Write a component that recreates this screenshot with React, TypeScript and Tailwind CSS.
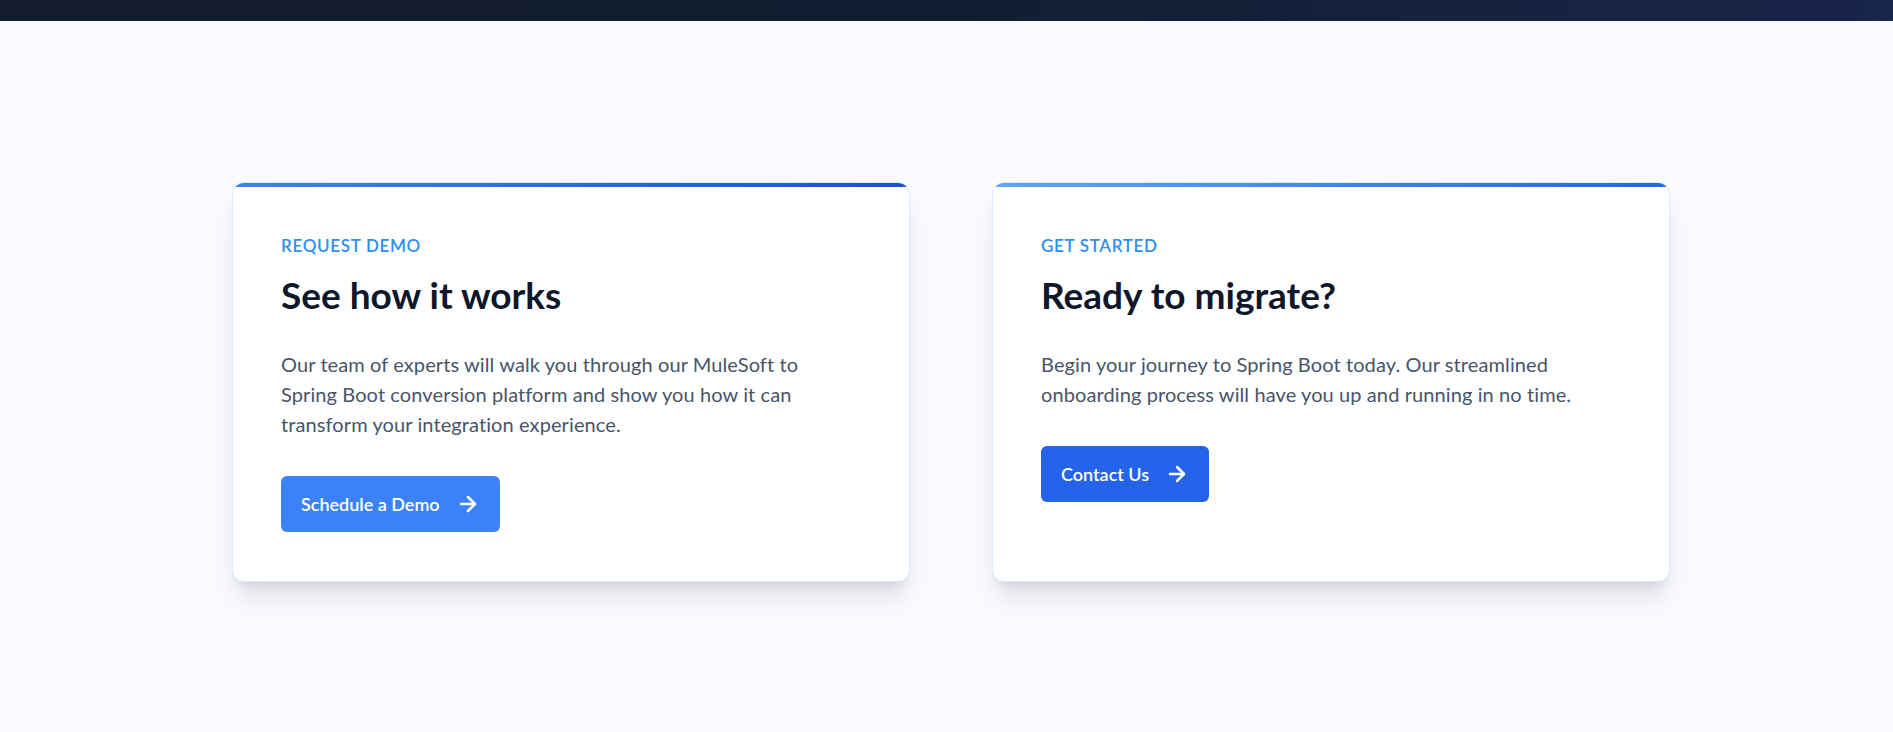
import { ArrowRight } from "lucide-react";

const cards = [
  {
    eyebrow: "Request Demo",
    title: "See how it works",
    body: "Our team of experts will walk you through our MuleSoft to Spring Boot conversion platform and show you how it can transform your integration experience.",
    cta: "Schedule a Demo",
    bar: "from-[#3b82f6] to-[#1d4ed8]",
    btn: "bg-[#3b82f6] hover:bg-[#2563eb]",
  },
  {
    eyebrow: "Get Started",
    title: "Ready to migrate?",
    body: "Begin your journey to Spring Boot today. Our streamlined onboarding process will have you up and running in no time.",
    cta: "Contact Us",
    bar: "from-[#60a5fa] to-[#2563eb]",
    btn: "bg-[#2563eb] hover:bg-[#1d4ed8]",
  },
];

export default function App() {
  return (
    <div className="min-h-screen bg-[#f8fafd] font-['Lato','Segoe_UI',sans-serif]">
      <div className="h-[21px] bg-linear-to-r from-[#131c2f] via-[#131d31] to-[#18254a]" />

      <section className="pt-[161px] pb-24">
        <div className="ml-[232px] grid grid-cols-[678px_678px] gap-[82px]">
          {cards.map((card) => (
            <div
              key={card.title}
              className="bg-white rounded-xl border border-[#dbeafe] shadow-xl overflow-hidden"
            >
              <div className={`h-1 bg-linear-to-r ${card.bar}`} />
              <div className="px-12 pt-[47px] pb-[49px]">
                <p className="text-[17px] leading-6 font-semibold uppercase tracking-[0.04em] text-[#2e90f0]">
                  {card.eyebrow}
                </p>
                <h2 className="mt-[15px] text-[37px] leading-[44px] font-bold text-slate-900">
                  {card.title}
                </h2>
                <p className="mt-8 text-[20px] leading-[30px] tracking-[0.005em] text-[#475569] max-w-[560px]">
                  {card.body}
                </p>
                <button
                  className={`mt-[37px] inline-flex items-center gap-4 ${card.btn} text-white font-semibold text-lg leading-[23px] px-5 py-4 rounded-md transition`}
                >
                  {card.cta}
                  <ArrowRight size={24} strokeWidth={2.5} />
                </button>
              </div>
            </div>
          ))}
        </div>
      </section>
    </div>
  );
}
